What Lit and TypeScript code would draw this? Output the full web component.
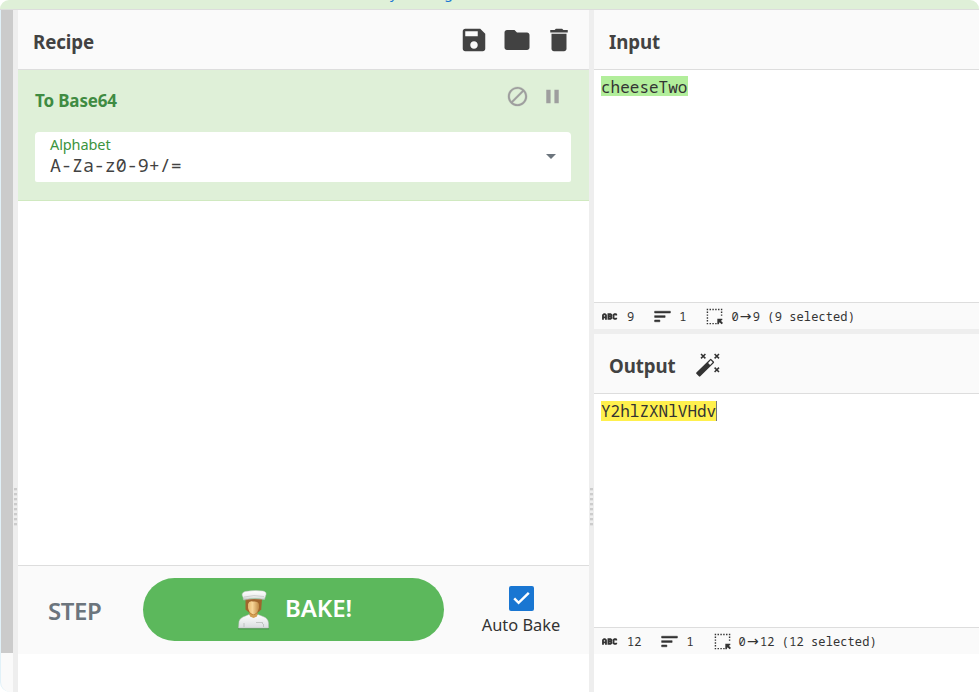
import { LitElement, html, css, svg } from "lit";
import { customElement, property } from "lit/decorators.js";

const ICONS: Record<string, unknown> = {
  save: svg`<path d="M17 3H5c-1.11 0-2 .9-2 2v14c0 1.1.89 2 2 2h14c1.1 0 2-.9 2-2V7l-4-4zm-5 16c-1.66 0-3-1.34-3-3s1.34-3 3-3 3 1.34 3 3-1.34 3-3 3zm3-10H5V5h10v4z"/>`,
  folder: svg`<path d="M10 4H4c-1.1 0-1.99.9-1.99 2L2 18c0 1.1.9 2 2 2h16c1.1 0 2-.9 2-2V8c0-1.1-.9-2-2-2h-8l-2-2z"/>`,
  trash: svg`<path d="M6 19c0 1.1.9 2 2 2h8c1.1 0 2-.9 2-2V7H6v12zM19 4h-3.5l-1-1h-5l-1 1H5v2h14V4z"/>`,
  disable: svg`<path d="M12 2C6.480 2 2 6.480 2 12s4.480 10 10 10 10-4.480 10-10S17.520 2 12 2zM4 12c0-4.420 3.580-8 8-8 1.850 0 3.550.630 4.900 1.690L5.690 16.900C4.630 15.550 4 13.850 4 12zm8 8c-1.850 0-3.550-.630-4.900-1.690L18.310 7.100C19.370 8.450 20 10.150 20 12c0 4.420-3.580 8-8 8z" stroke="currentColor" stroke-width=".3"/>`,
  pause: svg`<path d="M5.500 19h4.500V5H5.500v14zm8.500-14v14h4.500V5H14z"/>`,
  lines: svg`<path d="M3 18h6v-2H3v2zM3 6v2h18V6H3zm0 7h12v-2H3v2z" stroke="currentColor" stroke-width=".6"/>`,
  abc: svg`<path fill="none" stroke="currentColor" stroke-width="2.600" d="M2.800 16.500V10L4.300 8.800h1.200L7 10v6.500M2.800 13.300H7M10.500 8.800v6.500h3l1-1V13L13.500 12l1-1.200V9.800L13.500 8.800zM10.500 12h3M21.500 10.500V9.300l-.5-.5h-2l-1.300 1v4.700l1.300 .8H21l.5-.5v-1.200"/>`,
  select: svg`<path d="M1 1h2v2H1zM5 1h2v2H5zM9 1h2v2H9zM13 1h2v2h-2zM17 1h2v2h-2zM21 1h2v2h-2zM1 5h2v2H1zM1 9h2v2H1zM1 13h2v2H1zM1 17h2v2H1zM1 21h2v2H1zM5 21h2v2H5zM9 21h2v2H9zM13 21h2v2h-2zM21 5h2v2h-2zM21 9h2v2h-2zM16 15h7v2l-2 1 3 3-2 2-3-3-1 3h-2z"/>`,
  wand: svg`<path fill-rule="evenodd" d="M15 7.200L1.400 20.400Q.7 21.100 1.400 21.800L3.900 24.300Q4.600 25 5.300 24.300L18.800 11Q19.500 10.300 18.800 9.600L16.400 7.200Q15.700 6.500 15 7.200zM13.100 10.900l2.600-2.600 2 2-2.600 2.600z"/><path fill="none" stroke="currentColor" stroke-width="1.500" d="M6 2l4.400 4.400m0-4.400L6 6.400M19.600 2L24 6.400m0-4.400l-4.400 4.400M19.600 15.600L24 20m0-4.400L19.600 20"/>`,
  chef: svg`
    <defs>
      <linearGradient id="hat" x2="0" y2="1"><stop stop-color="#fff"/><stop offset=".65" stop-color="#eceeed"/><stop offset="1" stop-color="#b9bdbb"/></linearGradient>
      <linearGradient id="face" x2="1"><stop stop-color="#e5b96f"/><stop offset=".4" stop-color="#f8d798"/><stop offset="1" stop-color="#c08a45"/></linearGradient>
      <linearGradient id="coat" x2="0" y2="1"><stop stop-color="#fff"/><stop offset="1" stop-color="#d9dcdf"/></linearGradient>
    </defs>
    <path fill="#4d9b4f" d="M1 38h31v1.500H1z"/>
    <path fill="#a0652c" d="M8.500 9h16.500l-.8 10.500-3.200 3h-9l-3.500-3z"/>
    <path fill="#be8036" d="M12.500 20h8v7h-8z"/>
    <path fill="url(#face)" d="M11 14Q12 10.500 16 11.500 21.500 11 22 14.500V18Q21 23 16.500 24.500 12 23 11 18z"/>
    <path fill="url(#coat)" stroke="#b7bbb9" stroke-width=".5" d="M1.500 38L2 31.500Q3 27.500 8.500 26L12 24.500Q16 29 21 24.500L26 26.500Q31 28 31.500 33V38z"/>
    <path fill="#d3a056" d="M12.500 23Q16 27 20.500 23L20 26.500 16.500 28 13 26.500z"/>
    <path fill="none" stroke="#a8acaa" d="M19 32.500h6.500v1.500M7 33v4M26.500 34v3" stroke-width=".6"/>
    <path fill="url(#hat)" stroke="#c0c4c2" stroke-width=".5" d="M6.500 10L6 7Q3.500 3 8 1.500 18-.2 26 1 30.500 2 28.500 6L27.500 9.500Q17 7.500 6.500 10z"/>
    <path fill="none" stroke="#b5b9b7" stroke-width=".6" d="M7 7Q17 4.500 27 6.500"/>`,
  check: svg`<path fill="none" stroke="#fff" stroke-width="2.400" d="M5 11.900l4.200 4.200L19 6.500"/>`,
};

@customElement("cc-icon")
class CcIcon extends LitElement {
  @property() name = "";
  @property() box = "0 0 24 24";
  static styles = css`
    :host { display: block; flex: none; }
    svg { display: block; width: 100%; height: 100%; fill: currentColor; }
  `;
  render() {
    return html`<svg viewBox=${this.box}>${ICONS[this.name]}</svg>`;
  }
}

@customElement("status-bar")
class StatusBar extends LitElement {
  @property({ type: Number }) count = 0;
  static styles = css`
    :host {
      display: flex; align-items: center; flex: none; box-sizing: border-box;
      height: 27px; padding: 1px 0 0 7px; background: #fafafa; border-top: 1px solid #ddd;
      font: 12px/18px "Noto Sans Mono", "DejaVu Sans Mono", monospace;
      color: #333; white-space: pre;
    }
    cc-icon { width: 17px; height: 17px; }
    .abc { margin-right: 9px; }
    .lines { width: 21px; height: 21px; margin: 0 6px 0 18px; }
    .sel { width: 17px; height: 17px; margin: 0 8px 0 20px; }
    .range { display: flex; letter-spacing: .1px; }
    .arrow { width: 14px; text-align: center; font-family: "DejaVu Sans", sans-serif; font-size: 14px; line-height: 16px; letter-spacing: 0; }
  `;
  render() {
    const n = this.count;
    return html`
      <cc-icon class="abc" name="abc"></cc-icon><span>${n}</span>
      <cc-icon class="lines" name="lines"></cc-icon><span>1</span>
      <cc-icon class="sel" name="select"></cc-icon>
      <div class="range"><span>0</span><span class="arrow">→</span><span>${n} (${n} selected)</span></div>`;
  }
}

@customElement("app-root")
class AppRoot extends LitElement {
  static styles = css`
    :host {
      display: flex; flex-direction: column; height: 692px; overflow: hidden;
      background: #fff; color: #424242; font-family: "Noto Sans", "Open Sans", sans-serif;
    }
    * { box-sizing: border-box; }
    .banner {
      height: 10px; flex: none; background: #dff0d8; border-bottom: 1px solid #ddd;
      border-radius: 9px 9px 0 0; overflow: hidden; display: flex; padding-left: 390px;
      color: #1976d2; font-size: 14px; line-height: 18px; white-space: pre;
    }
    .banner span { margin-top: -16px; }
    .banner .second { margin-left: 47px; }
    .main { flex: 1; display: flex; min-height: 0; }
    .ops { width: 13px; flex: none; border-left: 1px solid #e1f1f8; background: #fafafa; border-radius: 0 0 0 10px; }
    .thumb { height: 643px; background: #cbcbcb; }
    .gutter { width: 5px; flex: none; background: #eee; padding: 478px 1px 0; }
    .grip { height: 38px; background: repeating-linear-gradient(#ccc 0 2px, #e2e2e2 2px 3px, #eee 3px 5px); }
    .recipe { width: 571px; flex: none; display: flex; flex-direction: column; height: 644px; }
    .title {
      height: 60px; flex: none; display: flex; align-items: center; padding: 5px 15px 0;
      background: #fafafa; border-bottom: 1px solid #ddd;
      font-weight: 700; font-size: 18.700px; line-height: 28px; letter-spacing: -.1px;
    }
    .tools { margin: -4px 0 0 auto; display: flex; gap: 12.500px; }
    .tools cc-icon { width: 30px; height: 30px; }
    .op { height: 131px; background: #dff0d8; border-bottom: 1px solid #d0e9c0; padding: 14px 18px 0 17px; }
    .ophead { height: 48px; display: flex; color: #3f8b42; font-weight: 700; font-size: 17px; line-height: 34px; letter-spacing: -.15px; }
    .optools { margin-left: auto; display: flex; color: #9e9e9e; padding: 1px 7px 0 0; gap: 12px; }
    .optools cc-icon { width: 23px; height: 23px; }
    .field { height: 50px; display: flex; justify-content: space-between; background: #fff; border-radius: 4px 4px 2px 2px; padding: 3px 15px 0; }
    .label { font-size: 14.500px; line-height: 18px; color: #3c9440; letter-spacing: -.1px; }
    .value { font: 18.300px/24px "Noto Sans Mono", "DejaVu Sans Mono", monospace; }
    .caret { height: 5px; margin-top: 19px; border: 5px solid transparent; border-top-color: #6c757d; border-bottom: 0; }
    .controls { margin-top: auto; height: 89px; background: #fafafa; border-top: 1px solid #ddd; display: flex; align-items: center; padding-bottom: 2px; }
    .step { width: 125px; padding: 2px 0 0 30px; font-size: 24px; font-weight: 600; color: #6c757d; letter-spacing: -.4px; }
    .bake {
      width: 301px; height: 63px; border-radius: 32px; background: #5cb85c; color: #fff;
      display: flex; align-items: center; padding-left: 94px; gap: 14px;
      font-weight: 600; font-size: 24px; line-height: 34px; letter-spacing: -.1px;
    }
    .bake cc-icon { width: 34px; height: 40px; margin-top: 1px; }
    .bake span { margin-top: -3px; }
    .auto { flex: 1; display: flex; flex-direction: column; align-items: center; padding: 5px 0 0 9px; font-size: 16.400px; line-height: 24px; color: #333; }
    .box { width: 25px; height: 25px; border-radius: 2px; background: #1976d2; margin-bottom: 2px; }
    .io { flex: 1; display: flex; flex-direction: column; min-width: 0; }
    .text { flex: 1; padding: 7px 7px; font: 16px/19px "Noto Sans Mono", "DejaVu Sans Mono", monospace; color: #333; }
    .text span { display: block; width: fit-content; height: 20px; line-height: 22px; }
    .in { background: #b2ee9b; margin-top: -1px; padding-right: 1px; }
    .text .out { background: #fff04d; border-right: 1px solid #777; line-height: 20px; }
    .split { height: 5px; flex: none; background: #eee; }
    .wand { width: 26px; height: 26px; margin: -3px 0 0 19px; color: #333; }
    .input { height: 319px; display: flex; flex-direction: column; }
    .output { height: 320px; display: flex; flex-direction: column; }
  `;
  render() {
    return html`
      <div class="banner"><span>y</span><span class="second">g</span></div>
      <div class="main">
        <div class="ops"><div class="thumb"></div></div>
        <div class="gutter"><div class="grip"></div></div>
        <section class="recipe">
          <div class="title">Recipe
            <div class="tools">
              <cc-icon name="save"></cc-icon><cc-icon name="folder"></cc-icon><cc-icon name="trash"></cc-icon>
            </div>
          </div>
          <div class="op">
            <div class="ophead">To Base64
              <div class="optools"><cc-icon name="disable"></cc-icon><cc-icon name="pause"></cc-icon></div>
            </div>
            <div class="field">
              <div><div class="label">Alphabet</div><div class="value">A-Za-z0-9+/=</div></div>
              <div class="caret"></div>
            </div>
          </div>
          <div class="controls">
            <div class="step">STEP</div>
            <div class="bake"><cc-icon name="chef" box="0 0 34 40"></cc-icon><span>BAKE!</span></div>
            <div class="auto"><cc-icon class="box" name="check"></cc-icon>Auto Bake</div>
          </div>
        </section>
        <div class="gutter"><div class="grip"></div></div>
        <section class="io">
          <div class="input">
            <div class="title">Input</div>
            <div class="text"><span class="in">cheeseTwo</span></div>
            <status-bar .count=${9}></status-bar>
          </div>
          <div class="split"></div>
          <div class="output">
            <div class="title">Output<cc-icon class="wand" name="wand" box="0 0 26 26"></cc-icon></div>
            <div class="text"><span class="out">Y2hlZXNlVHdv</span></div>
            <status-bar .count=${12}></status-bar>
          </div>
        </section>
      </div>`;
  }
}
